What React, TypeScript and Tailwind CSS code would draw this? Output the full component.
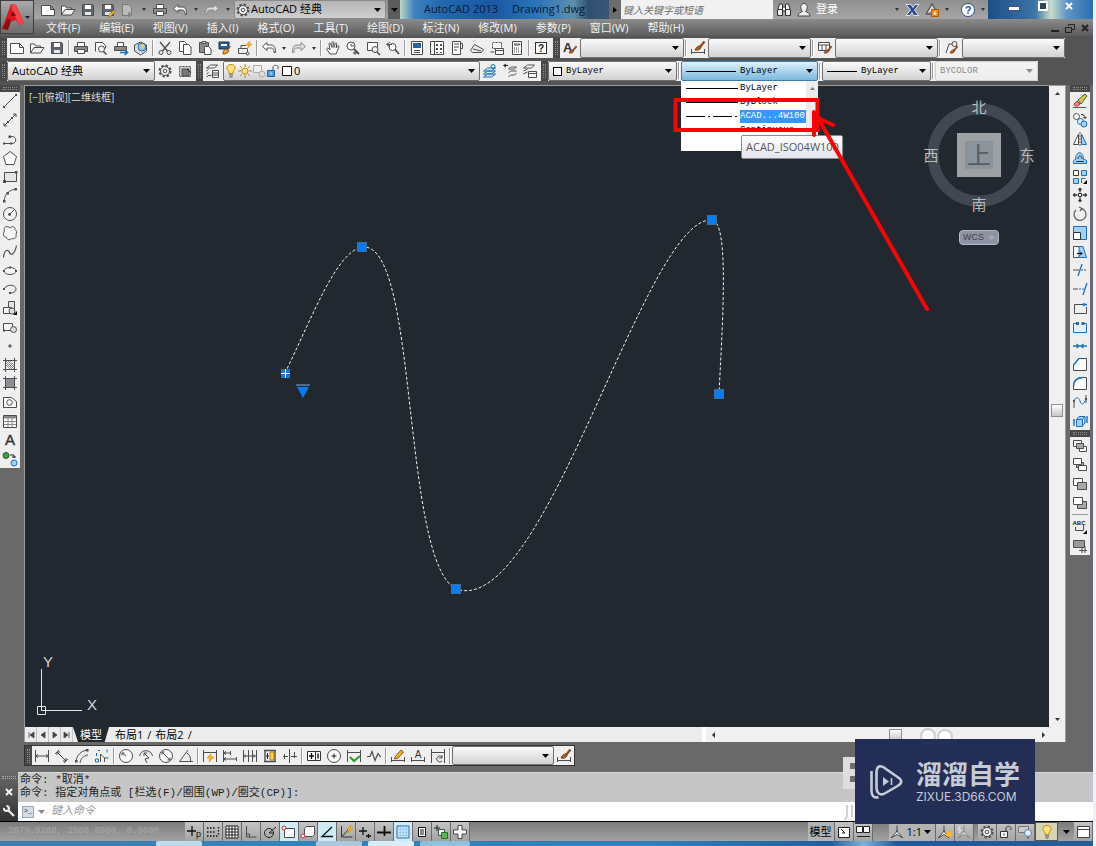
import { ReactNode, useState } from "react";
import clsx from "clsx";

const INK = "#4d4d4d";
const BLUE = "#1e6fb8";

// every glyph is drawn on a 16 x 16 grid
const floppy = (
  <>
    <path d="M2.5 2.5h10l1 1v10h-11z" fill="#5f6670" />
    <path d="M5 3h6v4H5z" fill="#fff" stroke="none" />
    <path d="M5 10h6v3H5z" fill="#e8e8e8" stroke="none" />
  </>
);
const brush = (
  <>
    <path d="M14.5 1.5l-5 6" stroke="#8a4f24" strokeWidth="2.4" />
    <path d="M10 6c-3 0-4 2-5 4 2.5.5 5 0 6-2.5z" fill="#a8622e" stroke="#7a4420" />
  </>
);
const spark = <path d="M13 1l-4 4h3l-2 4 5-5h-3z" fill="#ffb52e" stroke="#e08a00" strokeWidth=".6" />;

const icons: Record<string, ReactNode> = {
  new: <path d="M1.5 3.5h9l4 4v6h-13zM10.5 3.5v4h4" fill="#fff" />,
  open: (
    <>
      <path d="M1.5 13v-9h4l1 2h5v2" fill="#fff" />
      <path d="M1.5 13l3.5-5.5h10L11.5 13z" fill="#eee" />
    </>
  ),
  save: floppy,
  saveas: (
    <>
      {floppy}
      <path d="M8 14l6-6 1.5 1.5-6 6z" fill="#e9b23c" stroke="#8a5a10" strokeWidth=".7" />
    </>
  ),
  sheet: (
    <>
      <path d="M2.5 2.5h6l3 3v8h-9z" fill="#bbb" stroke="#777" />
      <path d="M8 9.5l5 3-5 3z" fill="#888" stroke="none" />
    </>
  ),
  print: (
    <>
      <path d="M4.5 6.5v-4h7v4" fill="#fff" />
      <path d="M1.5 6.5h13v5h-13z" fill="#8a8a8a" />
      <path d="M4.5 9.5h7v4h-7z" fill="#fff" />
    </>
  ),
  preview: (
    <>
      <path d="M2.5 11.5v-9h7l3 3v3" fill="#fff" />
      <circle cx="8.5" cy="9" r="3" fill="#f8f8f8" />
      <path d="M10.5 11.5l3 3" strokeWidth="1.6" />
    </>
  ),
  publish: (
    <>
      <path d="M4.5 6v-3.500h6V6" fill="#fff" />
      <path d="M1.5 6.5h12v4h-12z" fill="#8a8a8a" />
      <path d="M7 12.5h7M11.5 10l3 2.5-3 2.5" stroke={BLUE} strokeWidth="1.6" />
    </>
  ),
  globe: (
    <>
      <path d="M1.5 5l6-3 6 3v6l-6 4-6-4z" fill="#dcdcdc" />
      <circle cx="9" cy="7" r="4" fill="#8cc3ee" stroke={BLUE} />
      <path d="M7 6l3-2 2 3-3 2z" fill="#f2c94c" stroke="none" />
    </>
  ),
  cut: (
    <>
      <path d="M3 2l7.5 9M13 2L5.5 11" strokeWidth="1.3" />
      <circle cx="4" cy="12.5" r="2" />
      <circle cx="12" cy="12.5" r="2" />
    </>
  ),
  copy: (
    <>
      <path d="M2.5 1.5h5l2 2v8h-7z" fill="#fff" />
      <path d="M6.5 4.5h5l2.5 2.5v7.5H6.5z" fill="#fff" />
    </>
  ),
  paste: (
    <>
      <path d="M2.5 2.5h9v10h-9z" fill="#8b8b8b" />
      <path d="M5 1.5h4v2H5z" fill="#ddd" />
      <path d="M7.5 6.5h4l2.5 2.5v5.5H7.5z" fill="#fff" />
    </>
  ),
  match: (
    <>
      <path d="M2 2h10v7H2z" fill="#2a5fa8" stroke="#234" />
      <path d="M4 4h6v2H4z" fill="#fff" stroke="none" />
      <path d="M14 6l-4 4M10 9c-3 0-4 2-4 5 3 0 5-1 6-3z" fill="#e0a33a" stroke="#8a5520" />
    </>
  ),
  blockedit: (
    <>
      <path d="M1.5 13.5h9v-5h-9zM4 8V5.5h5" />
      <circle cx="10.5" cy="13.5" r="1.5" fill="#fff" />
      {spark}
    </>
  ),
  undo: <path d="M6 2.5L1.5 6.5l4.5 4V8h4c2 0 3 1 3 4.5h1.5C14.5 7 13 5 10 5H6z" fill="#fff" />,
  redo: <path d="M10 2.5l4.5 4-4.5 4V8H6c-2 0-3 1-3 4.5H1.5C1.5 7 3 5 6 5h4z" fill="#ddd" stroke="#8a8a8a" />,
  pan: (
    <path
      d="M5 14L2 9.5c-.8-1 .5-2 1.5-1L5 10 4 4c0-1.200 1.4-1.200 1.7 0L7 7.5 7 2.5c0-1.200 1.6-1.200 1.7 0L9 7.5l1.2-4c.3-1 1.7-.8 1.5.3L11.2 8l1.5-2c.7-.9 1.7 0 1.2 1L12 11.5 11 14z"
      fill="#fff"
    />
  ),
  zoomrt: (
    <>
      <circle cx="6" cy="6" r="4" fill="#fff" />
      <path d="M9 9l5 5" strokeWidth="1.8" />
      <path d="M6 4v2h3M8 13h4M10 11v4" />
    </>
  ),
  zoomwin: (
    <>
      <path d="M2.5 2.5h10v8h-10z" fill="#fff" />
      <circle cx="10" cy="9.5" r="3" fill="#f4f4f4" />
      <path d="M12 12l3 3" strokeWidth="1.6" />
    </>
  ),
  zoomprev: (
    <>
      <circle cx="7.5" cy="7" r="3.5" fill="#fff" />
      <path d="M10 9.5l4 4.5" strokeWidth="1.8" />
      <path d="M5 2L1.5 4.5 5 7M2 4.5h5" />
    </>
  ),
  props: (
    <>
      <path d="M2.5 1.5h11v13h-11z" fill="#fff" />
      <path d="M4 3h8v5H4z" fill="#2a62ac" stroke="none" />
      <path d="M5 10.5h6M5 12.5h6" />
    </>
  ),
  dcenter: (
    <>
      <path d="M1.5 1.5h13v13h-13zM5.5 2v12" fill="#fff" />
      <path d="M7 4h2v2H7zM11 4h2v2h-2zM7 8h2v2H7zM11 8h2v2h-2zM7 12h2v1H7zM11 12h2v1h-2z" fill={INK} stroke="none" />
    </>
  ),
  palette: (
    <>
      <path d="M3.5 1.5h8v13h-8z" fill="#fff" />
      <path d="M11.5 3.5h2v5h-2M5 4h5M5 7h5M5 10h3" />
    </>
  ),
  sheetset: <path d="M1.5 10.5l4-6 9 5-2 3h-9zM4 9l8 2" fill="#ececec" />,
  markup: (
    <>
      <path d="M3.5 2.5h9v6h-9z" strokeDasharray="2 1" fill="#fff" />
      <path d="M6.5 8.5h8v6h-8zM7 10.5h7M1.5 12h4" fill="#fff" />
    </>
  ),
  calc: (
    <>
      <path d="M3.5 1.5h9v13h-9z" fill="#fff" />
      <path d="M5.5 4h5v1h-5z" />
      <path d="M5 8h6M5 10h6M5 12h6" strokeDasharray="1 1" />
    </>
  ),
  help: (
    <>
      <rect x="2.5" y="2.5" width="11" height="11" fill="#fff" stroke="#333" />
      <text x="8" y="12" fontSize="10" fontWeight="700" textAnchor="middle" fill="#222" stroke="none">
        ?
      </text>
    </>
  ),
  textstyle: (
    <>
      <text x="1" y="12" fontSize="13" fontWeight="700" fill="#333" stroke="none">
        A
      </text>
      <g transform="translate(3 5) scale(.8)">{brush}</g>
    </>
  ),
  dimstyle: (
    <>
      <path d="M1.5 9v5M14.5 9v5M1.5 12.5h13" />
      {brush}
    </>
  ),
  tablestyle: (
    <>
      <path d="M1.5 2.5h11v8h-11zM1.5 5h11M5 5v5M9 5v5" fill="#fff" />
      <g transform="translate(3 5) scale(.8)">{brush}</g>
    </>
  ),
  mlstyle: (
    <>
      <path d="M2 13l3-9h3" />
      <circle cx="10.5" cy="4" r="2.5" />
      <g transform="translate(2 5) scale(.8)">{brush}</g>
    </>
  ),
  gear: (
    <>
      <circle cx="8" cy="8" r="5.5" strokeDasharray="2.4 1.9" strokeWidth="2" />
      <circle cx="8" cy="8" r="4.5" fill="#f2f2f2" />
      <circle cx="8" cy="8" r="1.8" />
    </>
  ),
  wsset: (
    <>
      <path d="M2.5 3.5h11v10h-11z" strokeDasharray="2 1" fill="#ccc" />
      <path d="M5 6h7v7H5z" fill="#777" />
      <path d="M10 6l4 4" stroke="#222" />
    </>
  ),
  layers: (
    <>
      <path d="M1.5 5l4-3h7l-3 3zM1.5 8l2-1.500M1.5 11l2-1.500M1.5 14l2-1.500h3" fill="#fff" />
      <path d="M7.5 7.5h6v7h-6zM8 10h5M8 12h5" fill="#fff" />
    </>
  ),
  bulb: (
    <>
      <path d="M8 1.5c-5 0-5 5-2 7v2h4v-2c3-2 3-7-2-7z" fill="#ffe37a" stroke="#b98a1c" />
      <path d="M6 12h4M6.5 14h3" stroke="#555" />
    </>
  ),
  sun: (
    <>
      <path d="M8 1v3M8 12v3M1 8h3M12 8h3M3 3l2 2M11 11l2 2M13 3l-2 2M3 13l2-2" stroke="#b5892a" />
      <circle cx="8" cy="8" r="3" fill="#ffe37a" stroke="#b98a1c" />
    </>
  ),
  vpfreeze: (
    <>
      <path d="M2.5 2.5h8v7h-8z" stroke="#aaa" fill="#eee" />
      <circle cx="11" cy="11" r="3" fill="#ddd" stroke="#aaa" />
    </>
  ),
  unlock: (
    <>
      <path d="M2.5 7.5h7v6h-7z" fill="#4aa3df" stroke="#1b6098" />
      <path d="M8 7V4.5c0-3 5-3 5 0V6" />
      <path d="M6 9.5v2" stroke="#fff" />
    </>
  ),
  unlockui: (
    <>
      <path d="M2.5 7.5h7v6h-7z" fill="#f4f4f4" stroke="#333" />
      <path d="M8 7V4.5c0-3 5-3 5 0V6" stroke="#333" />
      <path d="M6 9.5v2" stroke="#333" />
    </>
  ),
  swatch: <path d="M3.5 3.5h9v9h-9z" fill="#fff" stroke="#111" />,
  laycur: (
    <>
      <path d="M1.5 11l4-3h8l-4 3zM1.5 14l4-3h8l-4 3zM1.5 8l4-3h8l-4 3z" fill="#cfe6f7" stroke={BLUE} />
      <circle cx="11" cy="3.5" r="2" stroke={BLUE} />
    </>
  ),
  layprev: (
    <>
      <path d="M6.5 6l2-2h6l-2 2zM6.5 10l2-2h6M6.5 14l2-2h4l2-2" fill="#fff" />
      <path d="M4 1L1.5 2.5 4 4M2 2.5h4" stroke="#222" />
    </>
  ),
  laystate: (
    <>
      <path d="M1.5 5l4-3h7l-3 3zM1.5 8l4-2M1.5 11l4-2" fill="#fff" />
      <path d="M6.5 8.5h8v6h-8zM7 10.5h7" fill="#fff" />
    </>
  ),
  line: (
    <>
      <path d="M2 14L14 2" />
      <path d="M1 13h2v2H1zM13 1h2v2h-2z" fill={INK} stroke="none" />
    </>
  ),
  xline: (
    <>
      <path d="M2 14L14 2M2 11v3h3M11 2h3v3" />
      <path d="M5 9h2v2H5zM9 5h2v2H9z" fill={INK} stroke="none" />
    </>
  ),
  pline: (
    <>
      <path d="M2 12.5h8c5 0 5-7 0-7H8" />
      <path d="M1 11.5h2v2H1zM8 11.5h2v2H8zM6.5 4.5H9V7H6.5z" fill={INK} stroke="none" />
    </>
  ),
  polygon: <path d="M8 1.5l6.5 5-2.5 8H4l-2.500-8z" fill="#fff" />,
  rect: (
    <>
      <path d="M2.5 3.5h12v9h-12z" fill="#e4e4e4" />
      <path d="M1 11h3v3H1zM13 2h2.5v2.5H13z" fill={INK} stroke="none" />
    </>
  ),
  arc: (
    <>
      <path d="M2 14C3 7 7 3 14 2" />
      <path d="M1 13h2.5v2.5H1zM4.5 5H7v2.5H4.5zM12.5 1H15v2.5h-2.500z" fill={INK} stroke="none" />
    </>
  ),
  circle: (
    <>
      <circle cx="8" cy="8" r="6.5" fill="#fafafa" />
      <path d="M8 8l4-4" />
      <circle cx="7.5" cy="8.5" r="1" fill={INK} />
    </>
  ),
  cloud: (
    <path
      d="M8 3C5 0 1 2 2.5 6c-2 3-1 6 2 6.5 1 3 4 2.5 5 1 3 1 5.500-1 4.5-4 1-2 .5-4-1-5C13 1 10 1 8 3z"
      fill="#f6f6f6"
    />
  ),
  spline: <path d="M1.5 13.5c1-9 5-8 6-5s5 3 7-7" strokeWidth="1.2" />,
  ellipse: (
    <>
      <ellipse cx="8" cy="8" rx="6" ry="3.5" fill="#f6f6f6" />
      <path d="M1 7h2v2H1zM13 7h2v2h-2zM7 3.5h2v2H7z" fill={INK} stroke="none" />
    </>
  ),
  ellarc: (
    <>
      <path d="M2 8c2-5 12-5 12 0 0 3-3 4-6 4" />
      <path d="M1 7h2v2H1zM7 11h2v2H7z" fill={INK} stroke="none" />
    </>
  ),
  insert: (
    <>
      <path d="M6.5 1.5h6v8h-6z" fill="#e4e4e4" />
      <path d="M1.5 7.5h8v6h-8z" fill="#f6f6f6" />
      <circle cx="10" cy="11" r="3" fill="#ddd" />
      <path d="M15 11v4h-4z" fill="#000" stroke="none" />
    </>
  ),
  mkblock: (
    <>
      <path d="M1.5 4.5h9v7h-9z" fill="#f6f6f6" />
      <circle cx="11.5" cy="10.5" r="3" fill="#ddd" />
      <path d="M1 10.5h2v2H1z" fill={INK} stroke="none" />
    </>
  ),
  point: <circle cx="8" cy="8" r="1.2" fill="#999" />,
  hatch: (
    <>
      <path d="M1 3.5h14M1 12.5h14M3.5 1v14M12.5 1v14" />
      <path d="M4 8l4 4M4 4l8 8M8 4l4 4M6 4l6 6M4 6l6 6" strokeWidth=".6" />
    </>
  ),
  gradient: (
    <>
      <path d="M3.5 3.5h9v9h-9z" fill="#8a8f96" />
      <path d="M1 3.5h14M1 12.5h14M3.5 1v14M12.5 1v14" />
    </>
  ),
  region: (
    <>
      <path d="M1.5 3.5h8l5 4v6h-13z" fill="#fff" />
      <circle cx="7.5" cy="8.5" r="2.8" />
    </>
  ),
  table: (
    <>
      <path d="M1.5 2.5h13v12h-13z" fill="#fff" />
      <path d="M2 3h12v2.5H2z" fill="#888" stroke="none" />
      <path d="M2 8.5h12M2 11.5h12M6 5v9M10 5v9" stroke="#888" />
    </>
  ),
  mtext: (
    <text x="8" y="13" fontSize="15" textAnchor="middle" fill="#333" stroke="#333" strokeWidth=".4">
      A
    </text>
  ),
  addsel: (
    <>
      <circle cx="4" cy="4.5" r="3" fill="#3f9e3f" stroke="#226022" />
      <circle cx="12" cy="12" r="3" fill="#9fd0f5" stroke={BLUE} />
      <path d="M8 4h4v3M10 6h4" stroke="#222" />
    </>
  ),
  erase: (
    <>
      <path d="M2 11l3-3 3 3-2 2H3z" fill="#e88a8a" stroke="#a33" />
      <path d="M6 7l7-6 2 2-6 8z" fill="#e6c34a" stroke="#2d6e2d" />
      <path d="M1 14.5h13" stroke="#b34" />
    </>
  ),
  copyobj: (
    <>
      <circle cx="4.5" cy="4.5" r="3" fill="#fff" />
      <circle cx="8.5" cy="9.5" r="3" fill="#d6ecfb" stroke={BLUE} />
      <circle cx="12" cy="12" r="3" fill="#9fd0f5" stroke={BLUE} />
      <path d="M9 2.5c3 0 4 1 4 4M11.5 5L13 6.500l1.500-1.500" stroke="#222" />
    </>
  ),
  mirror: (
    <>
      <path d="M6.5 3v10.5h-5z" fill="#fff" />
      <path d="M9.5 3v10.5h5z" fill="#9fd0f5" stroke={BLUE} />
      <path d="M8 1v14" strokeDasharray="2 1" />
    </>
  ),
  offset: (
    <>
      <path d="M1.5 13.5h13v-3c-1-1-2-1-3-1 0-9-8-9-8 0-1 0-2 1-2 2z" fill="#9fd0f5" stroke={BLUE} />
      <path d="M4 11.5h8M6 9c0-4 4-4 4 0" stroke="#333" />
    </>
  ),
  array: (
    <>
      <path d="M1.5 1.5h5v5h-5z" fill="#fff" stroke="#333" />
      <path d="M9.5 1.5h5v5h-5zM1.5 9.5h5v5h-5z" fill="#9fd0f5" stroke={BLUE} />
      <path d="M9.5 14V9.5h4" stroke={BLUE} />
      <path d="M15 11v4h-4z" fill="#000" stroke="none" />
    </>
  ),
  move: (
    <>
      <path
        d="M8 1.5v4M8 10.5v4M1.5 8h4M10.5 8h4M6.5 3L8 1.5 9.5 3M6.5 13L8 14.5 9.5 13M3 6.5L1.5 8 3 9.5M13 6.5L14.5 8 13 9.5"
        stroke="#333"
        strokeWidth="1.3"
      />
      <path d="M6.5 6.5h3v3h-3z" fill="#fff" stroke="#333" />
    </>
  ),
  rotate: <path d="M9 2.5a6 6 0 1 1-5 1.5M7 1l3 1.5L8 5" stroke="#666" strokeWidth="1.3" />,
  scale: (
    <>
      <path d="M1.5 1.5h13v13h-13z" fill="#9fd0f5" stroke={BLUE} />
      <path d="M1.5 7.5h7v7h-7z" fill="#fff" stroke="#333" />
    </>
  ),
  stretch: (
    <>
      <path d="M1.5 2.5h7v11h-7z" fill="#fff" />
      <path d="M7 2.5h4l3.5 11H7z" fill="#9fd0f5" stroke={BLUE} />
      <path d="M5 9.5h5M8 7.5l2 2-2 2" stroke="#000" />
    </>
  ),
  trim: (
    <>
      <path d="M10 2L6 14" stroke={BLUE} strokeWidth="1.3" />
      <path d="M1 8h6" />
      <path d="M9 8h6" strokeDasharray="2 1" />
    </>
  ),
  extend: (
    <>
      <path d="M15 2l-4 12" stroke={BLUE} strokeWidth="1.3" />
      <path d="M1 8h5" />
      <path d="M7 8h5" stroke={BLUE} strokeDasharray="2 1" />
    </>
  ),
  breakpt: (
    <>
      <path d="M11 4.5H2.5v9h12V7" />
      <path d="M10 4.5h5M12 3v3" stroke={BLUE} strokeWidth="1.4" />
    </>
  ),
  break: (
    <>
      <path d="M5 4.5H1.5v9h13v-9H11" stroke={BLUE} />
      <path d="M4 3h3v3H4zM9.5 3h3v3h-3z" fill={BLUE} stroke="none" />
    </>
  ),
  join: <path d="M1 8h14M4.5 6L7 8l-2.500 2M11.5 6L9 8l2.500 2" stroke={BLUE} strokeWidth="1.3" />,
  chamfer: (
    <>
      <path d="M7 2.5h7.5v12h-13V9z" fill="#fff" />
      <path d="M1.5 9L7 2.5" stroke={BLUE} strokeWidth="1.4" />
    </>
  ),
  fillet: (
    <>
      <path d="M11 2.5h3.500v12h-13V11c0-6 4-8.500 9.500-8.500" fill="#fff" />
      <path d="M1.5 11.5c0-6 4-9 10-9" stroke={BLUE} strokeWidth="1.4" />
    </>
  ),
  blend: (
    <>
      <path d="M2 14V7M14 9V1" />
      <path d="M2 8c1-6 5-5 6-1s4 5 6-3" stroke={BLUE} />
      <path d="M1 6h2v2H1zM13 4h2v2h-2z" fill={INK} stroke="none" />
    </>
  ),
  explode: (
    <>
      <path d="M4.5 6.5h6v7h-6zM4.5 6.5l2.5-3h6l-2.500 3M13 4v6l-2.500 3" fill="#9fd0f5" stroke={BLUE} />
      <path d="M2 7v6M1 7h2M15 3v7" stroke={BLUE} strokeWidth="1.4" />
    </>
  ),
  front: (
    <>
      <path d="M1.5 2.5h8v6h-8zM7.5 8.5h7v5h-7z" fill="#fff" />
      <path d="M4.5 5.5h7v5h-7z" fill="#a8a8a8" />
    </>
  ),
  back: (
    <>
      <path d="M4.5 5.5h7v5h-7z" fill="#a8a8a8" />
      <path d="M1.5 1.5h8v6h-8zM6.5 8.5h8v5h-8z" fill="#fff" />
    </>
  ),
  above: (
    <>
      <path d="M1.5 2.5h9v7h-9z" fill="#fff" />
      <path d="M5.5 6.5h9v7h-9z" fill="#a8a8a8" />
    </>
  ),
  under: (
    <>
      <path d="M5.5 6.5h9v7h-9z" fill="#a8a8a8" />
      <path d="M1.5 2.5h9v7h-9z" fill="#fff" />
    </>
  ),
  annofront: (
    <>
      <text x="7" y="6" fontSize="6" fontWeight="700" textAnchor="middle" fill="#222" stroke="none">
        ABC
      </text>
      <path d="M3.5 8v3.500h8V5" />
      <path d="M15 11v4h-4z" fill="#000" stroke="none" />
    </>
  ),
  hatchback: (
    <>
      <path d="M1.5 2.5h11v7h-11z" fill="#999" />
      <path d="M7 12.5h8M10 10v5M13 8v7" />
    </>
  ),
  dimlin: <path d="M1.5 2v12M14.5 2v12M1.5 8h13M4 6.5L1.5 8 4 9.5M12 6.5L14.500 8 12 9.5" />,
  dimali: <path d="M1 6l4-4M10 15l4-4M3 4l9 9M3 7V4h3M12 10v3H9" />,
  dimarc: (
    <>
      <path d="M2 13C3 7 7 3 13 2M6 15c1-5 3-7 8-8" />
      <path d="M1 12h2.5v2.5H1zM12 1h2.5v2.5H12z" fill={INK} stroke="none" />
    </>
  ),
  dimord: (
    <>
      <path d="M6.5 14V6l4 4h4M10.5 14v-4" />
      <path d="M4 2.5h2M13 1.500v3M2.5 5v3M1.5 11v3h3v-3z" stroke={BLUE} />
    </>
  ),
  dimrad: (
    <>
      <circle cx="8" cy="8" r="6.5" fill="#fafafa" />
      <path d="M8 8L4 5M4 7.5V5h2.5" />
    </>
  ),
  dimjog: <path d="M1.5 8c1-7 12-7 13 0M9 15l-2-4 4-1-5-5M6 8V5h3" />,
  dimdia: (
    <>
      <circle cx="8" cy="8" r="6.5" fill="#fafafa" />
      <path d="M4 4l8 8M4 6.5V4h2.500M12 9.5V12H9.5" />
    </>
  ),
  dimang: <path d="M15 13.500H1.500L10 2M8.500 5c3 1 4 4 4 8" />,
  qdim: (
    <>
      <path d="M1.5 2v12M14.5 2v12M1.5 4.500h13" />
      <path d="M9 6l-4 4h3l-1 4 5-5H9z" fill="#ffb52e" stroke="#e08a00" strokeWidth=".6" />
    </>
  ),
  dimbase: <path d="M1.5 2v12M8.5 3v4M14.5 9v4M1.5 5h7M1.5 11h13M4 3.5L1.5 5 4 6.5M4 9.5L1.5 11 4 12.5" />,
  dimcont: <path d="M1.5 2v12M6.5 2v12M10.5 2v12M14.5 2v12M1.5 8h13M3 6.5v3M12 6.5v3" />,
  dimspace: (
    <>
      <path d="M2 2.5h12M2 13.5h12M3 2v12M13 2v12" strokeWidth="1.4" />
      <path d="M8 4h4v8H8z" fill="#ffd84a" stroke="#a97a10" />
      <path d="M4 8h3M5.5 5v6" stroke="#222" />
    </>
  ),
  dimbreak: <path d="M7.5 1v14M1 8.500h5M9 8.500h6M12.500 4v6M2.500 6v5" />,
  tol: (
    <>
      <path d="M1.5 3.5h13v9h-13zM9.5 4v8" fill="#fff" stroke="#333" />
      <path d="M5.5 5v6M3 8h5M12 5.5v5" stroke="#111" strokeWidth="1.4" />
    </>
  ),
  center: (
    <>
      <circle cx="8" cy="8" r="6.5" fill="#fafafa" />
      <path d="M8 5.500v5M5.500 8h5" stroke="#222" />
    </>
  ),
  inspect: (
    <>
      <path d="M1.5 2v12M14.5 2v12M1.5 4.5h13" />
      <path d="M4 9l4 4 6-5" stroke="#2f9e2f" strokeWidth="2.2" />
    </>
  ),
  jogline: <path d="M1 8.5h3l2-5 3 9 3-7 2 3h1" strokeWidth="1.2" />,
  dimedit: (
    <>
      <path d="M1.5 9v5M14.5 9v5M1.5 12.5h13" />
      <path d="M5 9l6-7 2.500 2-6 6.500-3 .5z" fill="#e9b23c" stroke="#8a5a10" />
    </>
  ),
  dimtedit: (
    <>
      <path d="M1.5 9v5M14.5 9v5M1.5 12.5h13" />
      <text x="8" y="10" fontSize="10" textAnchor="middle" fill="#333" stroke="none">
        A
      </text>
    </>
  ),
  dimupd: (
    <>
      <path d="M1.5 1v14M14.5 1v14M1.5 4.5h13" />
      <path d="M12 9a3 3 0 1 0 0 4M12 7v3h-3" />
    </>
  ),
  infer: (
    <>
      <path d="M1 7h9M6 2v10" stroke="#111" strokeWidth="1.3" />
      <text x="10" y="13" fontSize="9" fill="#111" stroke="none">
        p
      </text>
    </>
  ),
  snap: <path d="M2 4h9M2 8h9M2 12h12M13.5 3v8" stroke="#111" strokeWidth="1.3" strokeDasharray="1.5 1.5" />,
  grid: <path d="M2 2h12v12H2zM5 2v12M8 2v12M11 2v12M2 5h12M2 8h12M2 11h12" fill="#fff" stroke="#222" />,
  ortho: <path d="M3.5 2v11h10M3.5 10h3v3" />,
  polar: (
    <>
      <circle cx="7" cy="9" r="4.5" stroke="#222" />
      <path d="M7 9l7-6M7 9h5" stroke="#222" />
    </>
  ),
  osnap: (
    <>
      <path d="M3.5 4.5h10v9h-10z" fill="#fff" />
      <circle cx="3" cy="4" r="2" fill="#fff" stroke="#c33" />
    </>
  ),
  osnap3: (
    <>
      <path d="M4.5 4.5l2-2h8v8l-2 2h-8z" fill="#fff" />
      <circle cx="3" cy="12" r="2" fill="#fff" stroke="#c33" />
    </>
  ),
  otrack: <path d="M13 3L3 12.5h11" stroke="#111" strokeWidth="1.3" />,
  ducs: (
    <>
      <path d="M3.5 2v11h11M3.5 13L10 6" stroke="#333" />
      {spark}
    </>
  ),
  dyn: <path d="M2 7h8M6 3v8M9 12h5M11.500 10v4" stroke="#111" strokeWidth="1.3" />,
  lwt: <path d="M1 8.500h14M8.500 2v10" stroke="#111" strokeWidth="1.8" />,
  tpy: (
    <>
      <path d="M2 2h12v12H2z" fill="#cfe6f7" stroke={BLUE} />
      <path d="M2 5h12M2 8h12M2 11h12M5 2v12M8 2v12M11 2v12" stroke="#6fb1e0" strokeDasharray="1.5 1.5" />
    </>
  ),
  qp: <path d="M4.5 3.5h7v9h-7zM6 6h4M6 8h4M6 10h4" fill="#fff" stroke="#111" />,
  sc: (
    <>
      <path d="M1 4h6M4 1v6" stroke="#222" />
      <path d="M5.5 5.5h6v6h-6z" fill="#dfe" />
      <path d="M8.5 8.5h6v6h-6z" fill="#58b558" stroke="#2c702c" />
    </>
  ),
  am: <path d="M6 1.5h4V6h4.5v4H10v4.500H6V10H1.5V6H6z" fill="#fff" stroke="#444" />,
  layout: <path d="M2.5 3.5h11v10h-11zM5 5l4 4H6" fill="#fff" stroke="#222" />,
  qview: (
    <>
      <path d="M1.5 2.5h6v6h-6zM8.5 2.5h6v6h-6z" fill="#fff" stroke="#222" />
      <path d="M2 12.500h13" stroke="#222" />
    </>
  ),
  anno: <path d="M8 1.5v5l-1 2L2 14l6-3.500L14 14 9 8.5l-1-2" fill="#fff" stroke="#444" />,
  annovis: (
    <>
      <path d="M7 1.5v5l-1 2L1.5 14 7 10.5 12 14 8 8.5l-1-2" fill="#fff" stroke="#444" />
      <circle cx="12" cy="10" r="3" fill="#ffb52e" stroke="none" />
    </>
  ),
  annoauto: (
    <>
      <path d="M8 1.5v5l-1 2L2 14l6-3.500L14 14 9 8.5l-1-2" fill="#ddd" stroke="#888" />
      <path d="M4 2L2 6h3L3 9" stroke="#eee" />
    </>
  ),
  hw: (
    <>
      <path d="M1.5 2.5h10v6h-10z" fill="#ccc" stroke="#777" />
      <circle cx="11" cy="9" r="3.5" fill="#dfeaf5" stroke="#5a7fae" />
      <path d="M11 12v3" />
    </>
  ),
  clean: <path d="M2.5 2.5h12v11h-12zM2.5 5.5h12" fill="#fff" stroke="#444" />,
  binoc: (
    <path
      d="M2 7l1.500-5h3v5M14 7l-1.500-5h-3v5M1.5 7.5h5v6h-5zM9.5 7.5h5v6h-5zM6.5 5h3v4h-3z"
      fill="#eee"
      stroke="#333"
    />
  ),
  user: <path d="M2 14c0-3 3-4 4.500-4.500-3-3-2-8 1.500-8s4.500 5 1.500 8C11 10 14 11 14 14z" fill="#eee" stroke="#444" />,
  exchange: (
    <path
      d="M2 2.5h5l2 3 2-3h4L10.500 8l4 5.500h-5l-1.500-3-2 3H2L6.500 8z"
      fill="#2b4d8f"
      stroke="#fff"
      strokeWidth=".8"
    />
  ),
  stay: (
    <>
      <path d="M2 12L8 2l3 5M2 12h5" fill="#ddd" stroke="#555" strokeWidth="1.4" />
      <path d="M7.5 7.5h7v7h-7z" fill="#f08a24" stroke="#b35a00" />
      <path d="M11 9v3.500M9.5 11l1.500 1.500 1.500-1.500" stroke="#fff" />
    </>
  ),
  helpround: (
    <>
      <circle cx="8" cy="8" r="6.5" fill="#fff" stroke="#2b4d8f" />
      <text x="8" y="12" fontSize="11" fontWeight="700" textAnchor="middle" fill="#2b4d8f" stroke="none">
        ?
      </text>
    </>
  ),
};

type ToolItem = { name: string; active?: boolean };

function Icon({ name }: { name: string }) {
  return (
    <svg
      viewBox="0 0 16 16"
      className="size-4 shrink-0"
      fill="none"
      stroke={INK}
      fontFamily="Liberation Sans"
      aria-hidden
    >
      {icons[name]}
    </svg>
  );
}

function Caret({ className = "text-black" }: { className?: string }) {
  return (
    <svg viewBox="0 0 7 4" className={clsx("pointer-events-none h-1 w-[7px] shrink-0", className)} aria-hidden>
      <path d="M0 0h7L3.500 4z" fill="currentColor" />
    </svg>
  );
}

function More() {
  return (
    <button aria-label="more" className="flex h-full w-2.5 shrink-0 items-center justify-center">
      <svg viewBox="0 0 4 3" className="h-[3px] w-1">
        <path d="M0 0h4L2 3z" fill="#333" />
      </svg>
    </button>
  );
}

// "|" is a separator, "v" a small drop-down arrow
function Tools({ items }: { items: string }) {
  return (
    <>
      {items.split(" ").map((name, i) => {
        if (name === "|")
          return <span key={i} className="mx-px h-4 w-0.5 shrink-0 border-l border-[#9a9a9a] bg-white" />;
        if (name === "v") return <More key={i} />;
        return (
          <button
            key={i}
            aria-label={name}
            className="flex h-full w-5 shrink-0 items-center justify-center hover:bg-sky-200"
          >
            <Icon name={name} />
          </button>
        );
      })}
    </>
  );
}

function Grip() {
  return (
    <span className="flex w-[7px] shrink-0 items-center justify-center self-stretch bg-[#484848]">
      <span className="h-3.5 w-[3px] border-x border-dotted border-[#8c8c8c]" />
    </span>
  );
}

function Combo({
  label,
  value = "",
  width,
  lead,
  mono,
  tone = "border-[#707070] from-[#fafafa] to-[#d2d2d2] text-black",
}: {
  label: string;
  value?: string;
  width: string;
  lead?: ReactNode;
  mono?: boolean;
  tone?: string;
}) {
  return (
    <span
      className={clsx("flex h-full shrink-0 items-center gap-1 rounded-xs border bg-linear-to-b px-1", width, tone)}
    >
      {lead}
      <select
        aria-label={label}
        className={clsx(
          "h-full min-w-0 flex-1 appearance-none bg-transparent outline-none",
          mono ? "pt-0.5 font-['Liberation_Mono',monospace] text-[9px]" : "text-[11px]"
        )}
      >
        <option>{value}</option>
      </select>
      <Caret className="text-current" />
    </span>
  );
}

function VerticalTools({ items, height }: { items: string; height: string }) {
  return (
    <div className="w-5">
      <div className="flex h-[7px] items-center justify-center bg-[#484848]">
        <span className="h-[3px] w-3.5 border-y border-dotted border-[#8c8c8c]" />
      </div>
      <div className={clsx("flex flex-col bg-[#efefef]", height)}>
        {items.split(" ").map((name, i) =>
          name === "|" ? (
            <span key={i} className="mx-0.5 my-0.5 border-t border-[#9a9a9a]" />
          ) : (
            <button
              key={i}
              aria-label={name}
              className="flex min-h-0 flex-1 items-center justify-center hover:bg-sky-200"
            >
              <Icon name={name} />
            </button>
          )
        )}
      </div>
    </div>
  );
}

const menus = [
  "文件(F)",
  "编辑(E)",
  "视图(V)",
  "插入(I)",
  "格式(O)",
  "工具(T)",
  "绘图(D)",
  "标注(N)",
  "修改(M)",
  "参数(P)",
  "窗口(W)",
  "帮助(H)",
];

function TitleBar() {
  return (
    <div className="flex h-[19px] items-center bg-linear-to-b from-[#8f8f8f] to-[#a6a6a6] pl-1">
      <Tools items="new open save saveas sheet" />
      <span className="flex h-full w-3 justify-center">
        <More />
      </span>
      <Tools items="print undo" />
      <span className="flex h-full w-3 justify-center">
        <More />
      </span>
      <Tools items="redo" />
      <span className="flex h-full w-3 justify-center">
        <More />
      </span>
      <Combo
        label="workspace"
        value="AutoCAD 经典"
        width="w-[152px]"
        lead={
          <span className="-mx-1 flex">
            <Icon name="gear" />
          </span>
        }
        tone="border-[#8a8a8a] from-[#b4b4b4] to-[#d0d0d0] text-black"
      />
      <span className="ml-0.5 flex h-full w-3 items-center justify-center bg-[#5c5c5c]">
        <Caret />
      </span>
      <h1 className="flex h-full min-w-0 flex-1 items-center justify-center gap-3.5 bg-[linear-gradient(90deg,#b9d6c6_0%,#3d82bd_7%,#2168b0_20%,#1b57a4_45%,#2a74bb_65%,#5f8fae_83%,#2f4f72_90%,#3a5875_100%)] text-[11px] whitespace-nowrap text-[#0b1a2c]">
        <span>AutoCAD 2013</span>
        <span>Drawing1.dwg</span>
      </h1>
      <span className="flex h-full w-3 items-center justify-center bg-[#6d6d6d]">
        <svg viewBox="0 0 4 6" className="h-1.5 w-1">
          <path d="M0 0l4 3-4 3z" />
        </svg>
      </span>
      <input
        aria-label="search"
        placeholder="键入关键字或短语"
        className="h-full w-[152px] bg-[#f1f1f1] px-0.5 text-[10px] italic outline-none placeholder:text-[#6e6e6e]"
      />
      <div className="flex h-full w-[215px] items-center pl-px">
        <Tools items="binoc user" />
        <button className="ml-0.5 text-[11px] text-white">登录</button>
        <span className="ml-auto flex h-full">
          <Tools items="v exchange stay v" />
        </span>
        <span className="ml-1.5 flex h-full">
          <Tools items="helpround v" />
        </span>
      </div>
      <div className="flex h-full w-[105px] items-start justify-between bg-[linear-gradient(90deg,#1d4f87,#3b74a6_45%,#c9dccb_60%,#5f95c4_75%,#2b6fb2)] px-5 text-white">
        <button aria-label="minimize" className="mt-1.5 h-[5px] w-3 border border-slate-600 bg-white" />
        <button aria-label="restore" className="mt-px h-2.5 w-2.5 border-2 border-white bg-slate-700" />
        <button aria-label="close" className="mt-0.5 flex">
          <svg viewBox="0 0 8 8" className="size-2" stroke="#fff" strokeWidth="2">
            <path d="M1 1l6 6M7 1L1 7" />
          </svg>
        </button>
      </div>
    </div>
  );
}

function Header() {
  return (
    <header className="flex bg-[#5c5c5c]">
      <button
        aria-label="application menu"
        className="flex h-[34px] w-[34px] shrink-0 items-center border border-[#3e3e3e] bg-linear-to-b from-[#a9a9a9] to-[#6d6d6d]"
      >
        <svg viewBox="0 0 24 30" className="h-[30px] w-6">
          <path d="M1 27L10 2l5 1 8 18-5 2-3-5-6 2-2 7z" fill="#d9171c" />
          <path d="M10 2l5 1 8 18-5 2-7-15z" fill="#f0454a" />
          <path d="M1 27l6 1 3-9-3-3z" fill="#8e0d10" />
          <path d="M10 14l2-5 3 5z" fill="#7a0b0e" />
        </svg>
        <svg viewBox="0 0 5 3" className="h-[3px] w-[5px]">
          <path d="M0 0h5L2.500 3z" fill="#222" />
        </svg>
      </button>
      <div className="min-w-0 flex-1">
        <TitleBar />
        <nav className="flex h-[17px] items-center gap-[19px] bg-linear-to-b from-[#8b8b8b] to-[#5c5c5c] pl-3 text-[11px] leading-none text-[#f3f3f3]">
          {menus.map((menu) => (
            <button key={menu} className="whitespace-nowrap">
              {menu}
            </button>
          ))}
          <span className="ml-auto flex items-center gap-1.5 pr-1">
            <button aria-label="minimize drawing" className="mt-1.5 h-0.5 w-2 bg-[#222]" />
            <button aria-label="restore drawing" className="flex">
              <svg viewBox="0 0 10 10" className="size-2.5" fill="none" stroke="#222">
                <path d="M3.500 3V1.500h6v5H7M.5 4.500h6v5h-6z" />
              </svg>
            </button>
            <button aria-label="close drawing" className="flex">
              <svg viewBox="0 0 8 8" className="size-2" stroke="#222" strokeWidth="2">
                <path d="M1 1l6 6M7 1L1 7" />
              </svg>
            </button>
          </span>
        </nav>
      </div>
    </header>
  );
}

const linetypes = [
  { name: "ByLayer", dash: "none" },
  { name: "ByBlock", dash: "none" },
  { name: "ACAD...4W100", dash: "19 3 2 3" },
  { name: "Continuous", dash: "none" },
];

function LinetypeList() {
  const [selected, setSelected] = useState("ACAD...4W100");
  return (
    <div className="absolute top-full left-0 z-20 flex h-[70px] w-[137px] bg-white">
      <ul className="flex-1 font-['Liberation_Mono',monospace] text-[9px] leading-none">
        {linetypes.map(({ name, dash }) => (
          <li key={name}>
            <button className="flex h-3.5 w-full items-center pl-[5px]" onClick={() => setSelected(name)}>
              <svg className="h-px w-[54px] shrink-0" aria-hidden>
                <path d="M0 .5h52" stroke="#000" strokeDasharray={dash} />
              </svg>
              <span
                className={clsx(
                  "w-[66px] text-left leading-[13px] whitespace-nowrap",
                  selected === name && "bg-[#3399ff] text-white"
                )}
              >
                {name}
              </span>
            </button>
          </li>
        ))}
      </ul>
      <div className="flex w-3 justify-center bg-[#ececec] pt-1.5">
        <svg viewBox="0 0 5 3" className="h-[3px] w-[5px]">
          <path d="M0 3h5L2.500 0z" fill="#777" />
        </svg>
      </div>
      <div
        role="tooltip"
        className="absolute top-[54px] left-[60px] flex h-6 w-[102px] items-center rounded-xs border border-[#8a8a8a] bg-linear-to-b from-white to-[#e3e4ee] px-1 text-[11px] text-[#575757]"
      >
        ACAD_ISO04W100
      </div>
    </div>
  );
}

function Toolbars() {
  const strip = "flex h-5 shrink-0 items-center bg-[#efefef]";
  return (
    <div className="flex flex-col gap-[3px] bg-[#545454] pt-0.5 pb-1">
      <div className="flex">
        <Grip />
        <div className={clsx(strip, "pr-0.5")}>
          <Tools items="new open save | print preview publish globe | cut copy paste match blockedit | undo v redo v | pan zoomrt zoomwin zoomprev | props dcenter palette sheetset markup calc | help" />
        </div>
        <Grip />
        <div className={strip}>
          <Tools items="textstyle" />
          <Combo label="text style" width="w-[104px]" />
          <Tools items="| dimstyle" />
          <Combo label="dimension style" width="w-[103px]" />
          <Tools items="| tablestyle" />
          <Combo label="table style" width="w-[103px]" />
          <Tools items="| mlstyle" />
          <Combo label="multileader style" width="w-[103px]" />
        </div>
      </div>
      <div className="flex">
        <Grip />
        <div className={clsx(strip, "pr-px")}>
          <Combo label="workspace" value="AutoCAD 经典" width="w-[148px]" />
          <Tools items="gear wsset" />
        </div>
        <Grip />
        <div className={clsx(strip, "pr-px")}>
          <Tools items="layers" />
          <Combo
            label="layer"
            value="0"
            width="w-[257px]"
            lead={
              <span className="-mx-1 flex">
                {["bulb", "sun", "vpfreeze", "unlock", "swatch"].map((name) => (
                  <span key={name} className="flex w-3.5 justify-center">
                    <Icon name={name} />
                  </span>
                ))}
              </span>
            }
          />
          <Tools items="laycur layprev laystate" />
        </div>
        <Grip />
        <div className={strip}>
          <Combo
            label="color"
            value="ByLayer"
            width="w-[129px]"
            mono
            lead={<span className="size-[9px] shrink-0 border border-black bg-white" />}
          />
          <Tools items="|" />
          <div className="relative h-full">
            <Combo
              label="linetype"
              value="ByLayer"
              width="w-[137px]"
              mono
              lead={<span className="h-px w-[50px] shrink-0 bg-black" />}
              tone="border-[#3c7fb1] from-[#dff1fb] to-[#79b9dd] text-black"
            />
            <LinetypeList />
          </div>
          <Tools items="|" />
          <Combo
            label="lineweight"
            value="ByLayer"
            width="w-[109px]"
            mono
            lead={<span className="h-px w-[30px] shrink-0 bg-black" />}
          />
          <Tools items="|" />
          <Combo
            label="plot style"
            value="BYCOLOR"
            width="w-[103px]"
            mono
            tone="border-[#d0d0d0] from-[#f4f4f4] to-[#ececec] text-[#8c8c8c]"
          />
        </div>
      </div>
    </div>
  );
}

const grips = [
  [337, 161],
  [431, 503],
  [687, 134],
  [694, 308],
];

function ViewCube() {
  return (
    <div className="absolute top-2 right-2.5 flex w-[120px] flex-col items-center">
      <svg viewBox="0 0 120 122" className="h-[122px] w-[120px]" fontFamily="Noto Sans CJK SC" aria-hidden>
        <circle cx="60" cy="61" r="46" fill="none" stroke="#414852" strokeWidth="11" />
        <rect x="38" y="39" width="44" height="44" fill="#9da1a3" />
        <rect x="46" y="47" width="28" height="28" fill="#8b949b" />
        <g textAnchor="middle" fill="#b9bbbd" fontSize="15">
          <text x="60" y="19">
            北
          </text>
          <text x="60" y="116">
            南
          </text>
          <text x="12" y="67">
            西
          </text>
          <text x="108" y="67">
            东
          </text>
          <text x="60" y="70" fontSize="24" fill="#555c63">
            上
          </text>
        </g>
      </svg>
      <button className="mt-3.5 flex h-[15px] w-10 items-center justify-between rounded-sm border border-[#b5b7c2] bg-[#8f93a3] px-[3px] font-['Liberation_Sans',sans-serif] text-[9px] text-[#3f4450]">
        WCS
        <Caret className="text-[#a9acb8]" />
      </button>
    </div>
  );
}

function Drawing() {
  return (
    <div className="relative min-w-0 flex-1 overflow-hidden bg-[#212830]">
      <p className="absolute top-1 left-1 text-[10px] leading-[14px] text-[#dcdcdc]">[−][俯视][二维线框]</p>
      <svg className="absolute inset-0 h-full w-full" aria-hidden>
        <path
          d="M260 287C287 232 311 166 337 161C394 154 376 474 431 503C520 534 620 129 687 134C705 135 697 244 694 308"
          fill="none"
          stroke="#f2f2f2"
          strokeDasharray="3 2"
        />
        {grips.map(([x, y]) => (
          <rect key={x} x={x - 4.5} y={y - 4.5} width="9" height="9" fill="#0a7cf2" stroke="#3d6f9e" />
        ))}
        <rect x="256" y="283" width="9" height="9" fill="#1877d8" />
        <path d="M256 287.500h9M260.500 283v9" stroke="#fff" />
        <path d="M271 298h14v2h-14z" fill="#4b6c8f" />
        <path d="M272 301h12l-6 11z" fill="#0a7cf2" />
      </svg>
      <svg
        className="absolute bottom-2 left-3 h-16 w-16"
        fill="none"
        stroke="#e6e6e6"
        fontFamily="Liberation Sans"
        aria-hidden
      >
        <path d="M.5 51.500h8v8h-8zM4.500 55V14M4 55.500h41" />
        <g fill="#d6d6d6" stroke="none" fontSize="15">
          <text x="6" y="12">
            Y
          </text>
          <text x="50" y="55">
            X
          </text>
        </g>
      </svg>
      <ViewCube />
    </div>
  );
}

function LayoutTabs() {
  return (
    <div className="flex h-[15px] items-center bg-[#ececec] text-[11px] leading-none">
      <div className="flex h-full">
        {["M3 1v6M8 1L4 4l4 3z", "M7 1L3 4l4 3z", "M3 1l4 3-4 3z", "M7 1v6M2 1l4 3-4 3z"].map((d) => (
          <button
            key={d}
            aria-label="scroll tabs"
            className="flex w-3 items-center justify-center border-r border-[#c4c4c4]"
          >
            <svg viewBox="0 0 10 8" className="h-2 w-2.5" fill="#444" stroke="#444" strokeWidth=".8">
              <path d={d} />
            </svg>
          </button>
        ))}
      </div>
      <button className="h-full w-9 bg-[#212830] text-white [clip-path:polygon(0_0,100%_0,88%_100%,14%_100%)]">
        模型
      </button>
      <span className="ml-1.5 flex items-center gap-1">
        <button>布局1</button>
        <span>/</span>
        <button>布局2</button>
        <span>/</span>
      </span>
      <div className="ml-auto flex h-full w-[363px] items-center border-l-4 border-white bg-[#f0f0f0]">
        <svg viewBox="0 0 3 6" className="ml-1.5 h-1.5 w-[3px]">
          <path d="M3 0v6L0 3z" fill="#333" />
        </svg>
        <span className="ml-[174px] h-3 w-[13px] border border-[#8e8e8e] bg-linear-to-b from-white to-[#c6c6c6]" />
        <svg className="ml-4 h-full w-9" fill="#fff" stroke="#cfcfcf" strokeWidth="2" aria-hidden>
          <circle cx="10" cy="9" r="7" />
          <circle cx="27" cy="10" r="7" />
        </svg>
        <svg viewBox="0 0 3 6" className="mr-5 ml-auto h-1.5 w-[3px]">
          <path d="M0 0v6l3-3z" fill="#333" />
        </svg>
      </div>
    </div>
  );
}

function CommandLine() {
  return (
    <section className="flex">
      <div className="flex w-[18px] flex-col items-center justify-between bg-linear-to-b from-[#6a6a6a] to-[#333] py-1">
        <span className="h-[3px] w-3.5 border-y border-dotted border-[#aaa]" />
        <button aria-label="close command line" className="flex">
          <svg viewBox="0 0 8 8" className="size-2" stroke="#fff" strokeWidth="1.8">
            <path d="M1 1l6 6M7 1L1 7" />
          </svg>
        </button>
        <button aria-label="customize" className="flex">
          <svg viewBox="0 0 12 12" className="size-3" fill="none" stroke="#eee" strokeWidth="2.2">
            <path d="M5 5l6 6M1 3a2.500 2.500 0 1 0 2.500-2" />
          </svg>
        </button>
      </div>
      <div className="min-w-0 flex-1 font-['Liberation_Mono','Noto_Sans_CJK_SC',monospace] text-[11px] text-[#1d1d1d]">
        <div className="h-[30px] border-t border-[#dadada] bg-[#c6c6c6] px-0.5 pt-px leading-[13px]">
          <p>命令: *取消*</p>
          <p>命令: 指定对角点或 [栏选(F)/圈围(WP)/圈交(CP)]:</p>
        </div>
        <label className="flex h-[19px] items-center gap-1 bg-white pl-1">
          <span className="flex h-3 w-3 items-center justify-center border border-[#9aa7b8] bg-[#d4dce8] text-[7px]">
            &gt;_
          </span>
          <Caret className="text-[#888]" />
          <input
            aria-label="command"
            placeholder="键入命令"
            className="ml-0.5 flex-1 italic outline-none placeholder:text-[#9a9a9a]"
          />
        </label>
      </div>
    </section>
  );
}

const modes: ToolItem[] = [
  { name: "infer" },
  { name: "snap" },
  { name: "grid" },
  { name: "ortho" },
  { name: "polar" },
  { name: "osnap", active: true },
  { name: "osnap3" },
  { name: "otrack", active: true },
  { name: "ducs" },
  { name: "dyn" },
  { name: "lwt" },
  { name: "tpy", active: true },
  { name: "qp" },
  { name: "sc" },
  { name: "am" },
];

function StatusButton({ name, active }: ToolItem) {
  return (
    <button
      aria-label={name}
      aria-pressed={active}
      className={clsx(
        "flex h-full w-[19px] items-center justify-center border-r border-[#6a6a6a]",
        active ? "bg-[#cfeaf3]" : "bg-linear-to-b from-[#c4c4c4] to-[#a4a4a4]"
      )}
    >
      <Icon name={name} />
    </button>
  );
}

function StatusBar() {
  return (
    <footer className="border-t border-black">
      <div className="flex h-[19px] items-center bg-linear-to-b from-[#7c7c7c] to-[#a2a2a2] text-[11px] leading-none text-black">
        <span className="w-[185px] pl-2 font-['Liberation_Mono',monospace] text-[9px] text-[#a8a8a8]">
          2879.9288, 2980.8960, 0.0000
        </span>
        {modes.map((mode) => (
          <StatusButton key={mode.name} {...mode} />
        ))}
        <div className="ml-auto flex h-full items-center">
          <button className="h-full border-r border-[#6a6a6a] bg-[#b4b4b4] px-0.5">模型</button>
          <StatusButton name="layout" />
          <StatusButton name="qview" />
          <span className="w-4" />
          <button className="flex h-full items-center gap-0.5 border-r border-[#6a6a6a] bg-[#b4b4b4] pr-1">
            <Icon name="anno" />
            1:1
            <Caret />
          </button>
          <StatusButton name="annovis" />
          <StatusButton name="annoauto" />
          <span className="w-1" />
          <StatusButton name="gear" />
          <StatusButton name="unlockui" />
          <StatusButton name="hw" />
          <span className="flex h-full w-[23px] items-center justify-center border border-[#555] bg-[#d8d4b8]">
            <Icon name="bulb" />
          </span>
          <span className="flex w-4 justify-center">
            <Caret />
          </span>
          <StatusButton name="clean" />
        </div>
      </div>
      <div className="flex h-[5px] bg-[linear-gradient(90deg,#3f7fae,#2f86b8_30%,#2d7fc0_60%,#1f5f9c_76%,#7fb0dc_79%,#1d5a9a_82%,#245f93)]">
        <span className="ml-[156px] w-[46px] rounded-t-xs bg-[#bcdcec]" />
        <span className="ml-[114px] w-[46px] rounded-t-xs bg-[#a9c9da]" />
        <span className="ml-1.5 w-[46px] rounded-t-xs bg-[#d8edf5]" />
        <span className="ml-1.5 w-[50px] rounded-t-xs bg-[#8cc0dc]" />
      </div>
    </footer>
  );
}

function Watermark() {
  return (
    <aside className="pointer-events-none absolute right-[61px] bottom-[22px] z-30 flex items-end">
      <svg className="h-[85px] w-3" aria-hidden>
        <path d="M0 18h12v32H0z" fill="#dedede" />
        <path d="M7 24h5v6H7zM7 37h5v6H7z" fill="#6e6e6e" />
        <path d="M4 66v10c0 3-1 4-3 4M9 66v12M4 61v2M9 61v2" stroke="#d2d2d2" strokeWidth="2" fill="none" />
      </svg>
      <div className="flex h-[85px] w-[180px] items-center gap-3 bg-[#222e55] pl-3.5 text-[#c7cbd6]">
        <svg viewBox="0 0 35 36" className="h-9 w-[35px]" fill="none" stroke="currentColor" strokeWidth="2.6">
          <path d="M2.5 7v20c0 5 3 7.500 7 6" />
          <path d="M7.5 9v14c0 7 4 9 9 6l12-7c5-3 5-6 0-9L17 5C11 0 7.500 2 7.500 9z" />
          <path d="M14 13l6 4.500-6 4.500z" fill="currentColor" stroke="none" />
          <path d="M22.500 14v7" strokeWidth="1.6" />
        </svg>
        <div className="flex flex-col pb-1">
          <strong className="text-[26px] leading-[34px]">溜溜自学</strong>
          <span className="font-['Inter',sans-serif] text-[12px] leading-3">ZIXUE.3D66.COM</span>
        </div>
      </div>
    </aside>
  );
}

export default function App() {
  return (
    <div className="relative flex min-h-screen flex-col overflow-hidden bg-[#eef3fb] pr-[3px] font-['Open_Sans','Noto_Sans_CJK_SC',sans-serif]">
      <Header />
      <Toolbars />
      <main className="flex flex-1 bg-[#696969]">
        <div className="w-6 shrink-0">
          <VerticalTools
            height="h-94"
            items="line xline pline polygon rect arc circle cloud spline ellipse ellarc insert mkblock point hatch gradient region table mtext addsel"
          />
        </div>
        <div className="flex min-w-0 flex-1 flex-col">
          <div className="flex flex-1 flex-col border-t border-r border-l border-[#9c9c9c]">
            <div className="flex flex-1">
              <Drawing />
              <div className="flex w-4 flex-col items-center bg-[#f0f0f0] py-1.5">
                <svg viewBox="0 0 5 3" className="h-[3px] w-[5px]">
                  <path d="M0 3h5L2.500 0z" fill="#333" />
                </svg>
                <span className="flex-1 pb-2" />
                <span className="h-[13px] w-3 border border-[#8e8e8e] bg-linear-to-b from-white to-[#c6c6c6]" />
                <span className="flex-1" />
                <svg viewBox="0 0 5 3" className="h-[3px] w-[5px]">
                  <path d="M0 0h5L2.500 3z" fill="#333" />
                </svg>
              </div>
            </div>
            <LayoutTabs />
          </div>
          <div className="mt-[3px] mb-1.5 flex h-[21px] self-start border border-[#333]">
            <Grip />
            <div className="flex items-center bg-[#efefef]">
              <Tools items="dimlin dimali dimarc dimord | dimrad dimjog dimdia dimang | qdim dimbase dimcont dimspace dimbreak | tol center inspect jogline | dimedit dimtedit dimupd |" />
              <Combo label="dimension style" width="w-[102px]" />
              <Tools items="dimstyle" />
            </div>
          </div>
        </div>
        <div className="w-[27px] shrink-0 pl-1">
          <VerticalTools
            height="h-[338px]"
            items="erase copyobj mirror offset array move rotate scale stretch trim extend breakpt break join chamfer fillet blend explode"
          />
          <VerticalTools height="h-[118px]" items="front back above under | annofront hatchback" />
        </div>
      </main>
      <CommandLine />
      <StatusBar />
      <Watermark />
      {/* call-out around the picked linetype */}
      <svg
        className="pointer-events-none absolute inset-0 z-40 h-full w-full"
        fill="none"
        stroke="#fb0207"
        strokeWidth="4"
        aria-hidden
      >
        <path d="M675.500 100h142v30h-142z" />
        <path d="M927 309L818 118l15 7M814 112v23" strokeLinecap="round" />
      </svg>
    </div>
  );
}
